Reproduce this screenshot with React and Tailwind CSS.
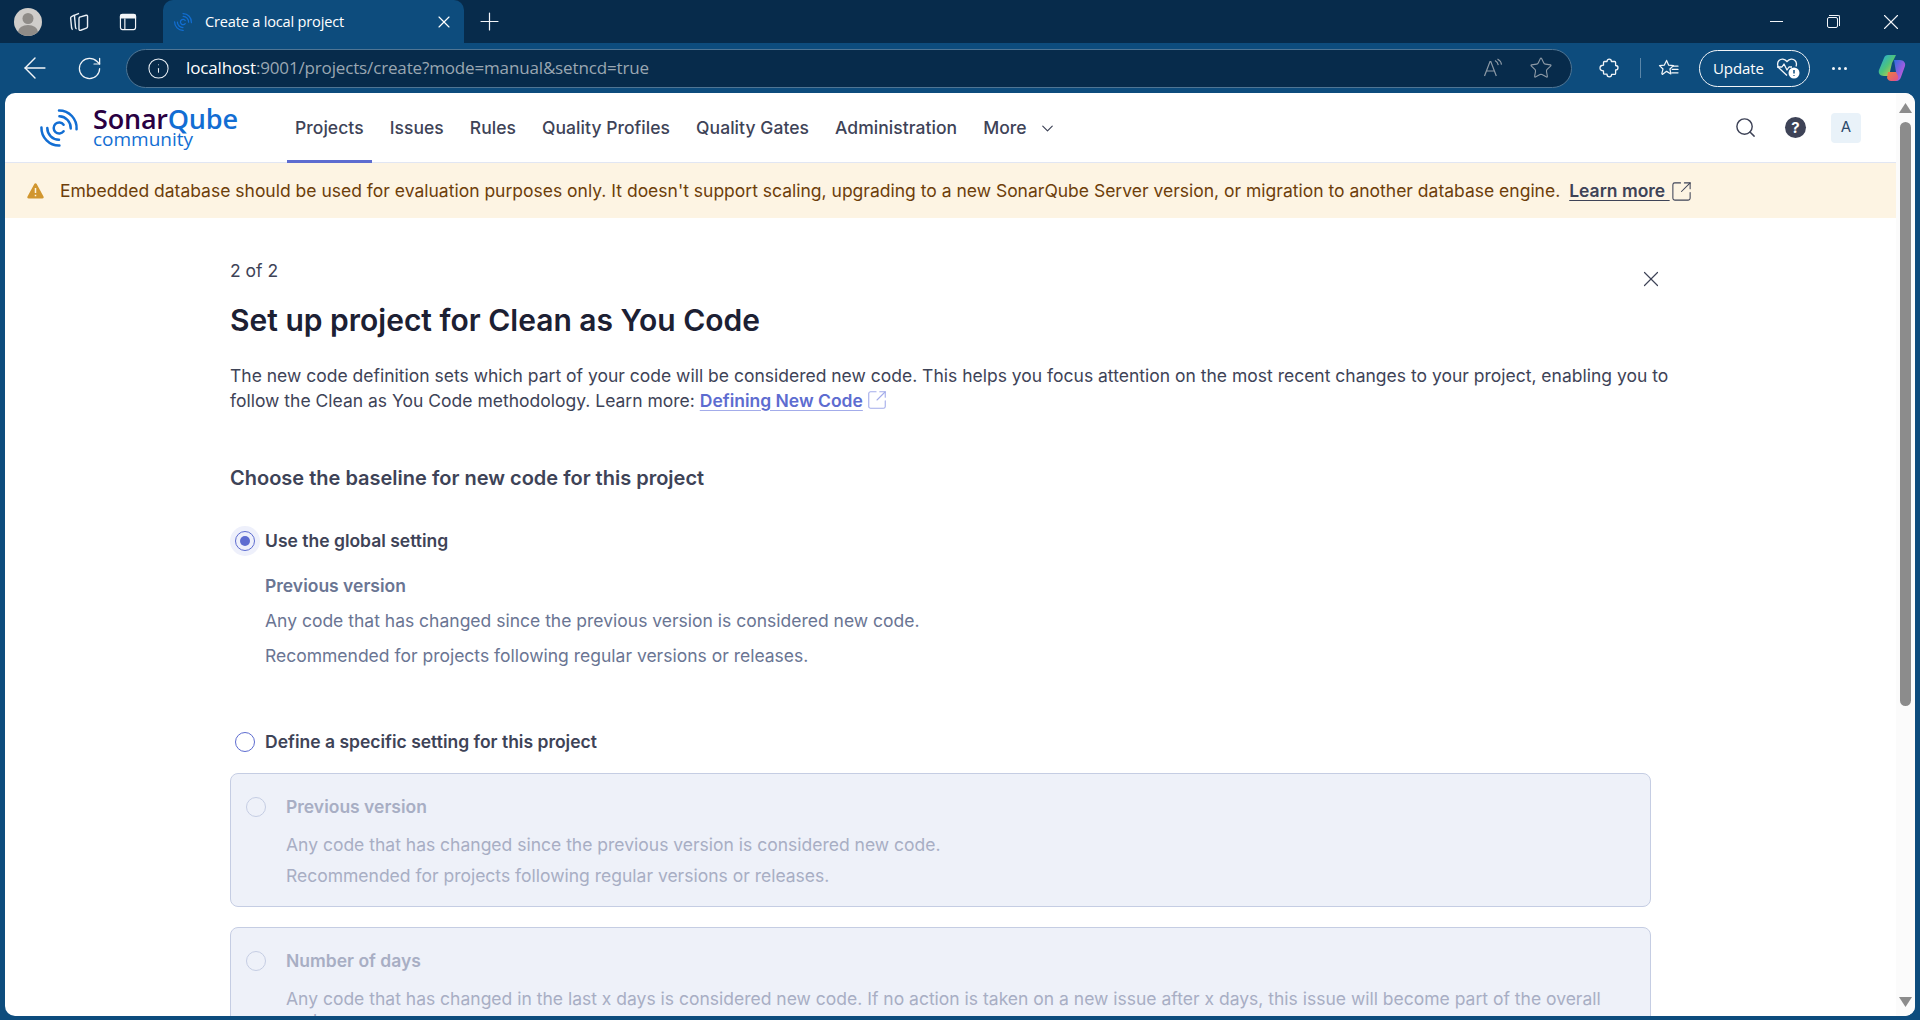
import React from "react";
import { ArrowLeft, ChevronDown, Info, Plus, RotateCw, Search, SquareArrowOutUpRight, Star, X } from "lucide-react";

const NAV_ITEMS = ["Issues", "Rules", "Quality Profiles", "Quality Gates", "Administration", "More"];

function SonarMark({ className }) {
  return (
    <svg viewBox="0 0 55 55" fill="none" stroke="#126ed3" strokeWidth="3" strokeLinecap="round" className={className}>
      <path d="M27.5 6.500A21 21 0 0 1 48.500 29" />
      <path d="M28 13.500A14 14 0 0 1 41.500 28" />
      <path d="M33 23.500A6.600 6.600 0 1 0 33 31.500" />
      <path d="M13.500 27.500A14 14 0 0 0 27.500 41.500" />
      <path d="M6.500 27A21 21 0 0 0 28 48.500" />
    </svg>
  );
}

function CollectionsIcon() {
  return (
    <svg viewBox="0 0 24 24" fill="none" stroke="#e8eef4" strokeWidth="1.3" strokeLinejoin="round" className="w-[26px] h-[26px]">
      <path d="M9 5.500 6 7c-.6.3-.9.8-.8 1.500l.9 9c.1.7.4 1.200 1 1.500" />
      <path d="M13 4 9.600 5.400c-.6.3-.9.8-.8 1.500l.9 10c.1.7.4 1.200 1 1.500" />
      <path d="M13.500 7.500l6-1.700c.8-.2 1.300.2 1.300 1v9.300c0 .8-.4 1.300-1 1.500l-5.300 2c-.9.3-1.600-.2-1.600-1.100V9c0-.7.2-1.200.6-1.500z" />
    </svg>
  );
}

function TabsIcon() {
  return (
    <svg viewBox="0 0 20 20" fill="none" className="w-[18px] h-[18px]">
      <path d="M3.500 1h13A2.500 2.500 0 0 1 19 3.500V6H1V3.500A2.500 2.500 0 0 1 3.500 1z" fill="#f2f5f8" />
      <rect x="1.600" y="1.600" width="16.800" height="16.800" rx="2.200" stroke="#f2f5f8" strokeWidth="1.300" />
      <path d="M6.500 6v12" stroke="#f2f5f8" strokeWidth="1.300" />
    </svg>
  );
}

function AvatarIcon() {
  return (
    <svg viewBox="0 0 28 28" className="w-[28px] h-[28px]">
      <defs>
        <clipPath id="avatar-clip">
          <circle cx="14" cy="14" r="14" />
        </clipPath>
      </defs>
      <g clipPath="url(#avatar-clip)">
        <rect width="28" height="28" fill="#cfcdca" />
        <circle cx="14" cy="10.500" r="5.500" fill="#8f8c88" />
        <ellipse cx="14" cy="24" rx="10" ry="7" fill="#8f8c88" />
      </g>
    </svg>
  );
}

function ReadAloudIcon() {
  return (
    <svg viewBox="0 0 20 20" fill="none" stroke="#8d9aa6" strokeWidth="1.2" className="w-[20px] h-[20px]">
      <path d="M1.500 18 7 3.500h.8L13.300 18M3.500 13h8" />
      <path d="M12 2.500c2 1 3 2.600 3.300 4.600M14.500 1c2.400 1.300 3.700 3.200 4 5.600" />
    </svg>
  );
}

function PuzzleIcon() {
  return (
    <svg viewBox="0 0 20 20" fill="none" stroke="#f2f5f8" strokeWidth="1.3" strokeLinejoin="round" className="w-[20px] h-[20px]">
      <path d="M8 3.500C8 2 9 1.200 10.200 1.200s2.200.8 2.200 2.300h3.200c.6 0 1 .4 1 1v3c1.600 0 2.400 1 2.400 2.200s-.8 2.300-2.400 2.300v3.400c0 .6-.4 1-1 1h-3c0 1.600-1 2.400-2.200 2.400S8 18.100 8 16.200H5.500c-.6 0-1-.4-1-1v-2.400C3 12.800 1 12 1 10s2-2.800 3.500-2.800V4.500c0-.6.4-1 1-1z" />
    </svg>
  );
}

function FavoritesIcon() {
  return (
    <svg viewBox="0 0 22 20" fill="none" stroke="#f2f5f8" strokeWidth="1.3" strokeLinejoin="round" className="w-[21px] h-[19px]">
      <path d="M9 1.500 11.200 6.500l5 .5-3.700 3.500 1 5.200L9 13l-4.500 3.200-.5-1 1.200-4.700L1.500 7l5-.5z" />
      <path d="M16 7.500h5M15 11h6M14.500 14.500H21" strokeLinecap="round" />
    </svg>
  );
}

function UpdateHeartIcon() {
  return (
    <svg viewBox="0 0 24 22" fill="none" className="w-[24px] h-[22px]">
      <path d="M11 18.500 3 11C1.200 9 1 5.500 3 3.500 5 1.500 8.500 1.500 11 4.500 13.500 1.500 17 1.500 19 3.500c1.500 1.500 1.800 3.800 1 6" stroke="#f2f5f8" strokeWidth="1.3" />
      <path d="M1 10h5l2-3 3 6 2-3h3" stroke="#f2f5f8" strokeWidth="1.3" strokeLinejoin="round" />
      <circle cx="18" cy="16" r="5.500" fill="#ffffff" />
      <path d="M18 13v3.500M18 18.200v.8" stroke="#0d4c7d" strokeWidth="1.500" />
    </svg>
  );
}

function CopilotIcon() {
  return (
    <svg viewBox="0 0 28 28" className="w-[28px] h-[28px]">
      <defs>
        <linearGradient id="copilot-left" x1="0" y1="0" x2="1" y2="1">
          <stop offset="0" stopColor="#1fa6e8" />
          <stop offset="0.5" stopColor="#4fc47a" />
          <stop offset="1" stopColor="#f6c93f" />
        </linearGradient>
        <linearGradient id="copilot-right" x1="0" y1="0" x2="1" y2="1">
          <stop offset="0" stopColor="#2a6fe0" />
          <stop offset="0.6" stopColor="#a05ce0" />
          <stop offset="1" stopColor="#e86bb5" />
        </linearGradient>
        <linearGradient id="copilot-bottom" x1="0" y1="0" x2="1" y2="1">
          <stop offset="0" stopColor="#f0803c" />
          <stop offset="1" stopColor="#e0508c" />
        </linearGradient>
      </defs>
      <path d="M10 1h8l-4 8-3 13H6c-4 0-6-3-5-6L6 4c.6-2 2-3 4-3z" fill="url(#copilot-left)" />
      <path d="M16 6h6c3.500 0 6 3 5 6l-4 11c-.6 2-2 4-5 4h-2l2-9z" fill="url(#copilot-right)" />
      <path d="M10 18h8l2 4c1 3-1 5-4 5h-3c-2 0-3-1-4-3z" fill="url(#copilot-bottom)" />
    </svg>
  );
}

function BrowserChrome() {
  return (
    <div className="shrink-0">
      <div className="h-[43px] bg-[#072b4b] flex items-center">
        <div className="ml-[14px] w-[28px] flex"><AvatarIcon /></div>
        <div className="ml-[23px] flex"><CollectionsIcon /></div>
        <div className="ml-[28px] flex"><TabsIcon /></div>
        <div className="ml-[26px] w-[301px] h-[43px] bg-[#0d4c7d] rounded-t-[10px] flex items-center pl-[9px] pr-[10px]">
          <SonarMark className="w-[22px] h-[22px]" />
          <span className="ml-[11px] flex-1 text-[14.6px] text-white font-['Open_Sans'] tracking-[-0.2px]">Create a local project</span>
          <X size={20} color="#ffffff" strokeWidth={1.4} />
        </div>
        <Plus size={29} color="#f2f5f8" strokeWidth={1} className="ml-[11px]" />
        <div className="ml-auto flex items-center">
          <div className="w-[13px] h-px bg-[#f2f5f8]" />
          <div className="ml-[44px] relative w-[13px] h-[13px]">
            <div className="absolute left-0 bottom-0 w-[11px] h-[11px] border border-[#f2f5f8] rounded-[2px]" />
            <div className="absolute right-0 top-0 w-[11px] h-[11px] border-t border-r border-[#f2f5f8] rounded-tr-[2px]" />
          </div>
          <X size={26} color="#f2f5f8" strokeWidth={1} className="ml-[38px] mr-[16px]" />
        </div>
      </div>
      <div className="h-[50px] bg-[#0d4c7d] flex items-center">
        <ArrowLeft size={34} color="#f2f5f8" strokeWidth={1} className="ml-[18px]" />
        <RotateCw size={27} color="#f2f5f8" strokeWidth={1.1} className="ml-[24px]" />
        <div className="ml-[23px] w-[1446px] h-[39px] rounded-full bg-[#072b4b] border border-[#4f7594] flex items-center pl-[20px] pr-[18px]">
          <Info size={23} color="#e8eef4" strokeWidth={1.1} />
          <span className="ml-[16px] flex-1 text-[17px] text-[#9aa7b2] font-['Open_Sans'] tracking-[-0.15px]">
            <span className="text-white">localhost</span>:9001/projects/create?mode=manual&amp;setncd=true
          </span>
          <ReadAloudIcon />
          <Star size={24} color="#8d9aa6" strokeWidth={1.1} className="ml-[26px]" />
        </div>
        <div className="ml-[27px] flex"><PuzzleIcon /></div>
        <div className="ml-[21px] w-px h-[20px] bg-[#5b86a8]" />
        <div className="ml-[17px] flex"><FavoritesIcon /></div>
        <div className="ml-[20px] w-[111px] h-[37px] rounded-full border border-[#f2f5f8] flex items-center pl-[13px]">
          <span className="text-[15px] text-white font-['Open_Sans'] tracking-[-0.1px]">Update</span>
          <div className="ml-[12px] flex"><UpdateHeartIcon /></div>
        </div>
        <div className="ml-[22px] flex gap-[3px]">
          <div className="w-[3px] h-[3px] rounded-full bg-[#f2f5f8]" />
          <div className="w-[3px] h-[3px] rounded-full bg-[#f2f5f8]" />
          <div className="w-[3px] h-[3px] rounded-full bg-[#f2f5f8]" />
        </div>
        <div className="ml-[31px] flex"><CopilotIcon /></div>
      </div>
    </div>
  );
}

function TopNav() {
  return (
    <div className="h-[70px] shrink-0 border-b border-[#e1e6f3] flex pl-[36px] pr-[35px]">
      <div className="w-[246px] flex items-center -mt-[1px]">
        <SonarMark className="w-[46px] h-[46px] -ml-[5px] mt-[2px]" />
        <div className="ml-[11px] flex flex-col font-['Open_Sans']">
          <span className="text-[27px] leading-[24px] font-semibold text-[#126ed3] tracking-[-0.2px]">
            <span className="text-[#290042]">Sonar</span>Qube
          </span>
          <span className="text-[19px] leading-[16px] text-[#126ed3]">community</span>
        </div>
      </div>
      <div className="flex gap-[10px] text-[17.5px] font-medium text-[#3e4357] tracking-[0.05px]">
        <div className="px-2 flex items-center border-b-[3px] border-[#5d6cd0] pt-[3px] -mb-px">Projects</div>
        {NAV_ITEMS.map((item) => (
          <div key={item} className="px-2 flex items-center pt-[1px]">
            {item}
            {item === "More" ? <ChevronDown size={19} strokeWidth={1.5} className="ml-[11px]" /> : null}
          </div>
        ))}
      </div>
      <div className="ml-auto flex items-center">
        <Search size={23} color="#3e4357" strokeWidth={1.5} />
        <div className="ml-[28px] w-[21px] h-[21px] rounded-full bg-[#3e4357] flex items-center justify-center text-[15px] leading-none font-bold text-white">?</div>
        <div className="ml-[25px] w-[30px] h-[30px] rounded-[4px] bg-[#e9f2f9] flex items-center justify-center text-[15px] text-[#2d4a6b]">A</div>
      </div>
    </div>
  );
}

function WarningBanner() {
  return (
    <div className="h-[55px] shrink-0 bg-[#fdf4e3] flex items-center pl-[22px] pt-[1px] text-[17.5px] text-[#6d3e0a]">
      <svg viewBox="0 0 17 16" className="w-[17px] h-[16px]">
        <path d="M7.300 1 .5 13.500c-.5 1 0 2 1.200 2h13.600c1.200 0 1.700-1 1.200-2L9.700 1c-.5-1-1.900-1-2.400 0z" fill="#d1962f" />
        <path d="M8.500 5v5M8.500 11.800v1.500" stroke="#fdf4e3" strokeWidth="1.500" />
      </svg>
      <span className="ml-[16px] whitespace-nowrap">
        Embedded database should be used for evaluation purposes only. It doesn't support scaling, upgrading to a new SonarQube Server version, or migration to another database engine.
      </span>
      <span className="ml-[9px] font-semibold text-[#3e4357] underline underline-offset-[3px] whitespace-pre">Learn more </span>
      <SquareArrowOutUpRight size={23} color="#3e4357" strokeWidth={1.1} />
    </div>
  );
}

function DisabledCard({ title, lines, className }) {
  return (
    <div className={`border border-[#c5cde3] bg-[#eef1f9] rounded-[8px] pt-[22px] pl-[15px] flex text-[17.5px] leading-[22px] text-[#a8aec4] ${className}`}>
      <div className="w-[20px] h-[20px] mt-px shrink-0 rounded-full border border-[#c5cde3]" />
      <div className="ml-[20px] pr-[40px]">
        <div className="font-semibold">{title}</div>
        {lines.map((line, index) => (
          <div key={line} className={index === 0 ? "mt-[16px]" : "mt-[9px]"}>{line}</div>
        ))}
      </div>
    </div>
  );
}

function ProjectForm() {
  return (
    <div className="pl-[225px] w-[1646px]">
      <div className="flex justify-between items-start pt-[42px]">
        <div className="text-[17.5px] leading-[22px] text-[#3e4357]">2 of 2</div>
        <X size={26} color="#3e4357" strokeWidth={1.1} className="mt-[6px] -mr-[13px] -mb-[10px]" />
      </div>
      <h1 className="mt-[21px] text-[30px] leading-[34px] font-semibold text-[#1c2033]">Set up project for Clean as You Code</h1>
      <p className="mt-[26px] text-[17.5px] leading-[25px] text-[#3e4357] whitespace-nowrap">
        The new code definition sets which part of your code will be considered new code. This helps you focus attention on the most recent changes to your project, enabling you to<br />
        follow the Clean as You Code methodology. Learn more:{" "}
        <span className="font-semibold text-[#5d6cd0] underline decoration-[#a3acea] underline-offset-[3px]">Defining New Code</span>
        <SquareArrowOutUpRight size={22} color="#a3acea" strokeWidth={1.2} className="inline ml-[3px] -mt-[4px]" />
      </p>
      <h2 className="mt-[53px] text-[20px] leading-[24px] font-semibold text-[#3e4357]">Choose the baseline for new code for this project</h2>

      <div className="mt-[36px] h-[30px] flex items-center">
        <div className="w-[30px] h-[30px] rounded-full bg-[#eef0fb] flex items-center justify-center">
          <div className="w-[20px] h-[20px] rounded-full border border-[#5d6cd0] flex items-center justify-center">
            <div className="w-[10px] h-[10px] rounded-full bg-[#5d6cd0]" />
          </div>
        </div>
        <span className="ml-[5px] text-[17.5px] font-semibold text-[#3e4357]">Use the global setting</span>
      </div>
      <div className="pl-[35px] text-[17.5px] leading-[22px] text-[#6a7593]">
        <div className="mt-[19px] font-semibold">Previous version</div>
        <div className="mt-[13px]">Any code that has changed since the previous version is considered new code.</div>
        <div className="mt-[13px]">Recommended for projects following regular versions or releases.</div>
      </div>

      <div className="mt-[60px] h-[30px] flex items-center">
        <div className="w-[30px] flex justify-center">
          <div className="w-[20px] h-[20px] rounded-full border border-[#5d6cd0]" />
        </div>
        <span className="ml-[5px] text-[17.5px] font-semibold text-[#3e4357]">Define a specific setting for this project</span>
      </div>

      <DisabledCard
        className="mt-[16px] h-[134px]"
        title="Previous version"
        lines={[
          "Any code that has changed since the previous version is considered new code.",
          "Recommended for projects following regular versions or releases.",
        ]}
      />
      <DisabledCard
        className="mt-[20px] h-[134px]"
        title="Number of days"
        lines={[
          "Any code that has changed in the last x days is considered new code. If no action is taken on a new issue after x days, this issue will become part of the overall code.",
        ]}
      />
    </div>
  );
}

function Scrollbar() {
  return (
    <div className="w-[19px] shrink-0 bg-[#fbfbfb] flex flex-col items-center pt-[10px] pb-[9px]">
      <svg viewBox="0 0 13 10" className="w-[13px] h-[10px]"><path d="M6.500 0 13 10H0z" fill="#8c8c8c" /></svg>
      <div className="mt-[9px] w-[11px] h-[584px] rounded-full bg-[#8c8c8c]" />
      <svg viewBox="0 0 13 10" className="mt-auto w-[13px] h-[10px]"><path d="M6.500 10 13 0H0z" fill="#8c8c8c" /></svg>
    </div>
  );
}

export default function App() {
  return (
    <div className="h-screen overflow-hidden bg-[#0d4c7d] flex flex-col font-['Inter',sans-serif]">
      <BrowserChrome />
      <div className="flex-1 min-h-0 ml-[5px] mr-[5px] mb-[4px] bg-white rounded-t-[10px] rounded-b-[10px] overflow-hidden flex">
        <div className="flex-1 min-w-0 flex flex-col overflow-hidden">
          <TopNav />
          <WarningBanner />
          <ProjectForm />
        </div>
        <Scrollbar />
      </div>
    </div>
  );
}
